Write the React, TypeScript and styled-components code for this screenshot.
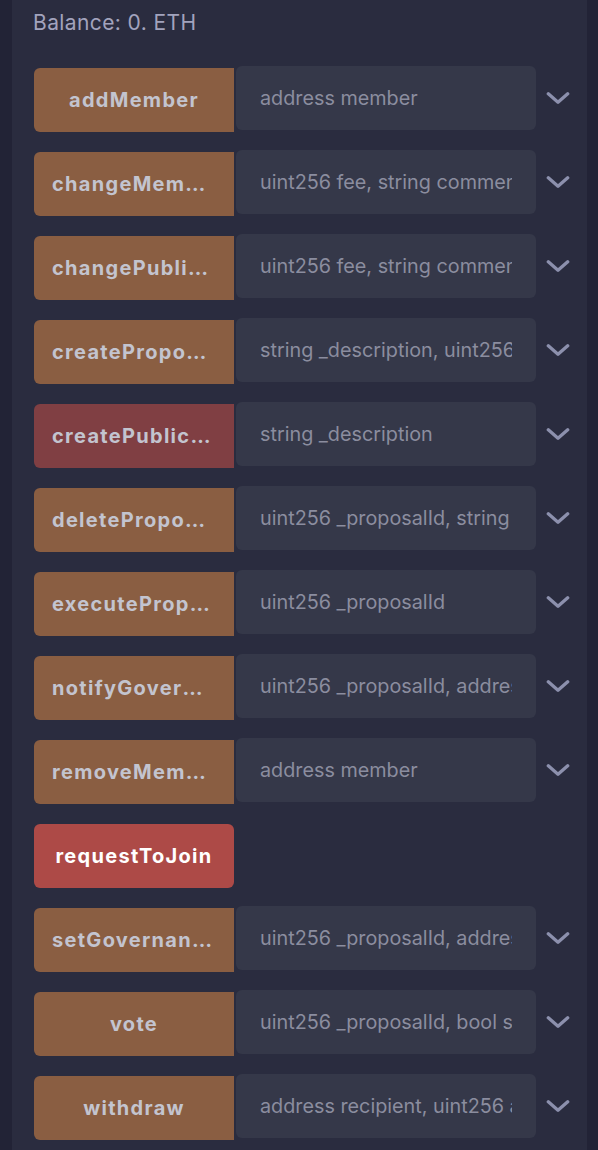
import React from "react";
import styled, { createGlobalStyle } from "styled-components";

const Global = createGlobalStyle`
  html, body { margin: 0; padding: 0; background: #222336; }
  body { font-family: Inter, "Noto Sans", "Liberation Sans", sans-serif; }
`;

const Page = styled.div`
  display: flex;
  width: 598px;
  height: 1150px;
  background: #222336;
  overflow: hidden;
`;

const Panel = styled.div`
  margin-left: 12px;
  width: 575px;
  background: #2a2c3f;
  display: flex;
  flex-direction: column;
  padding: 9px 0 0 22px;
  box-sizing: border-box;
`;

const Balance = styled.div`
  font-size: 21px;
  letter-spacing: 0.4px;
  color: #a2a3bd;
  line-height: 28px;
  height: 30px;
  margin-left: -1px;
  margin-bottom: 27px;
`;

const List = styled.div`
  display: flex;
  flex-direction: column;
  gap: 20px;
`;

const Row = styled.div`
  display: flex;
  align-items: flex-start;
  height: 64px;
`;

type Kind = "brown" | "dimred" | "red";

const bg: Record<Kind, string> = {
  brown: "#8a5e42",
  dimred: "#803f43",
  red: "#ad4a47",
};

const FnButton = styled.button<{ $kind: Kind; $solo?: boolean }>`
  width: 200px;
  height: 64px;
  margin-top: 2px;
  flex: none;
  border: none;
  background: ${(p) => bg[p.$kind]};
  color: ${(p) => (p.$kind === "red" ? "#ffffff" : "#c3c4cf")};
  font-family: Inter, "Noto Sans", "Liberation Sans", sans-serif;
  font-weight: 700;
  font-size: 20px;
  letter-spacing: 1.3px;
  padding: 0 18px;
  border-radius: ${(p) => (p.$solo ? "6px" : "6px 0 0 6px")};
  white-space: nowrap;
  overflow: hidden;
  text-overflow: ellipsis;
  text-align: center;
`;

const ArgInput = styled.div`
  margin-left: 2px;
  width: 300px;
  height: 64px;
  box-sizing: border-box;
  background: #353849;
  border-radius: 6px;
  padding: 0 24px;
  display: flex;
  align-items: center;
  overflow: hidden;
  white-space: nowrap;
  font-size: 19.8px;
  color: #8b8d9f;
`;

const ArgText = styled.span`
  overflow: hidden;
  display: block;
  width: 100%;
`;

const Chevron = styled.div`
  margin-left: 10px;
  width: 24px;
  height: 64px;
  display: flex;
  align-items: center;
  justify-content: center;
`;

const ChevronIcon = () => (
  <svg width="26" height="16" viewBox="0 0 26 16" fill="none">
    <path
      d="M2.5 3.5 L13 12.5 L23.5 3.5"
      stroke="#8c90ad"
      strokeWidth="3.6"
      strokeLinecap="round"
      strokeLinejoin="round"
    />
  </svg>
);

const fns: { name: string; kind: Kind; args?: string }[] = [
  { name: "addMember", kind: "brown", args: "address member" },
  { name: "changeMemberFee", kind: "brown", args: "uint256 fee, string comment" },
  { name: "changePublicFee", kind: "brown", args: "uint256 fee, string comment" },
  { name: "createProposal", kind: "brown", args: "string _description, uint256 _amount" },
  { name: "createPublicProposal", kind: "dimred", args: "string _description" },
  { name: "deleteProposal", kind: "brown", args: "uint256 _proposalId, string reason" },
  { name: "executeProposal", kind: "brown", args: "uint256 _proposalId" },
  { name: "notifyGovernance", kind: "brown", args: "uint256 _proposalId, address gov" },
  { name: "removeMember", kind: "brown", args: "address member" },
  { name: "requestToJoin", kind: "red" },
  { name: "setGovernance", kind: "brown", args: "uint256 _proposalId, address gov" },
  { name: "vote", kind: "brown", args: "uint256 _proposalId, bool support" },
  { name: "withdraw", kind: "brown", args: "address recipient, uint256 amount" },
];

export default function App() {
  return (
    <Page>
      <Global />
      <Panel>
        <Balance>Balance: 0. ETH</Balance>
        <List>
          {fns.map((f) => (
            <Row key={f.name}>
              <FnButton $kind={f.kind} $solo={!f.args}>
                {f.name}
              </FnButton>
              {f.args && (
                <>
                  <ArgInput>
                    <ArgText>{f.args}</ArgText>
                  </ArgInput>
                  <Chevron>
                    <ChevronIcon />
                  </Chevron>
                </>
              )}
            </Row>
          ))}
        </List>
      </Panel>
    </Page>
  );
}
